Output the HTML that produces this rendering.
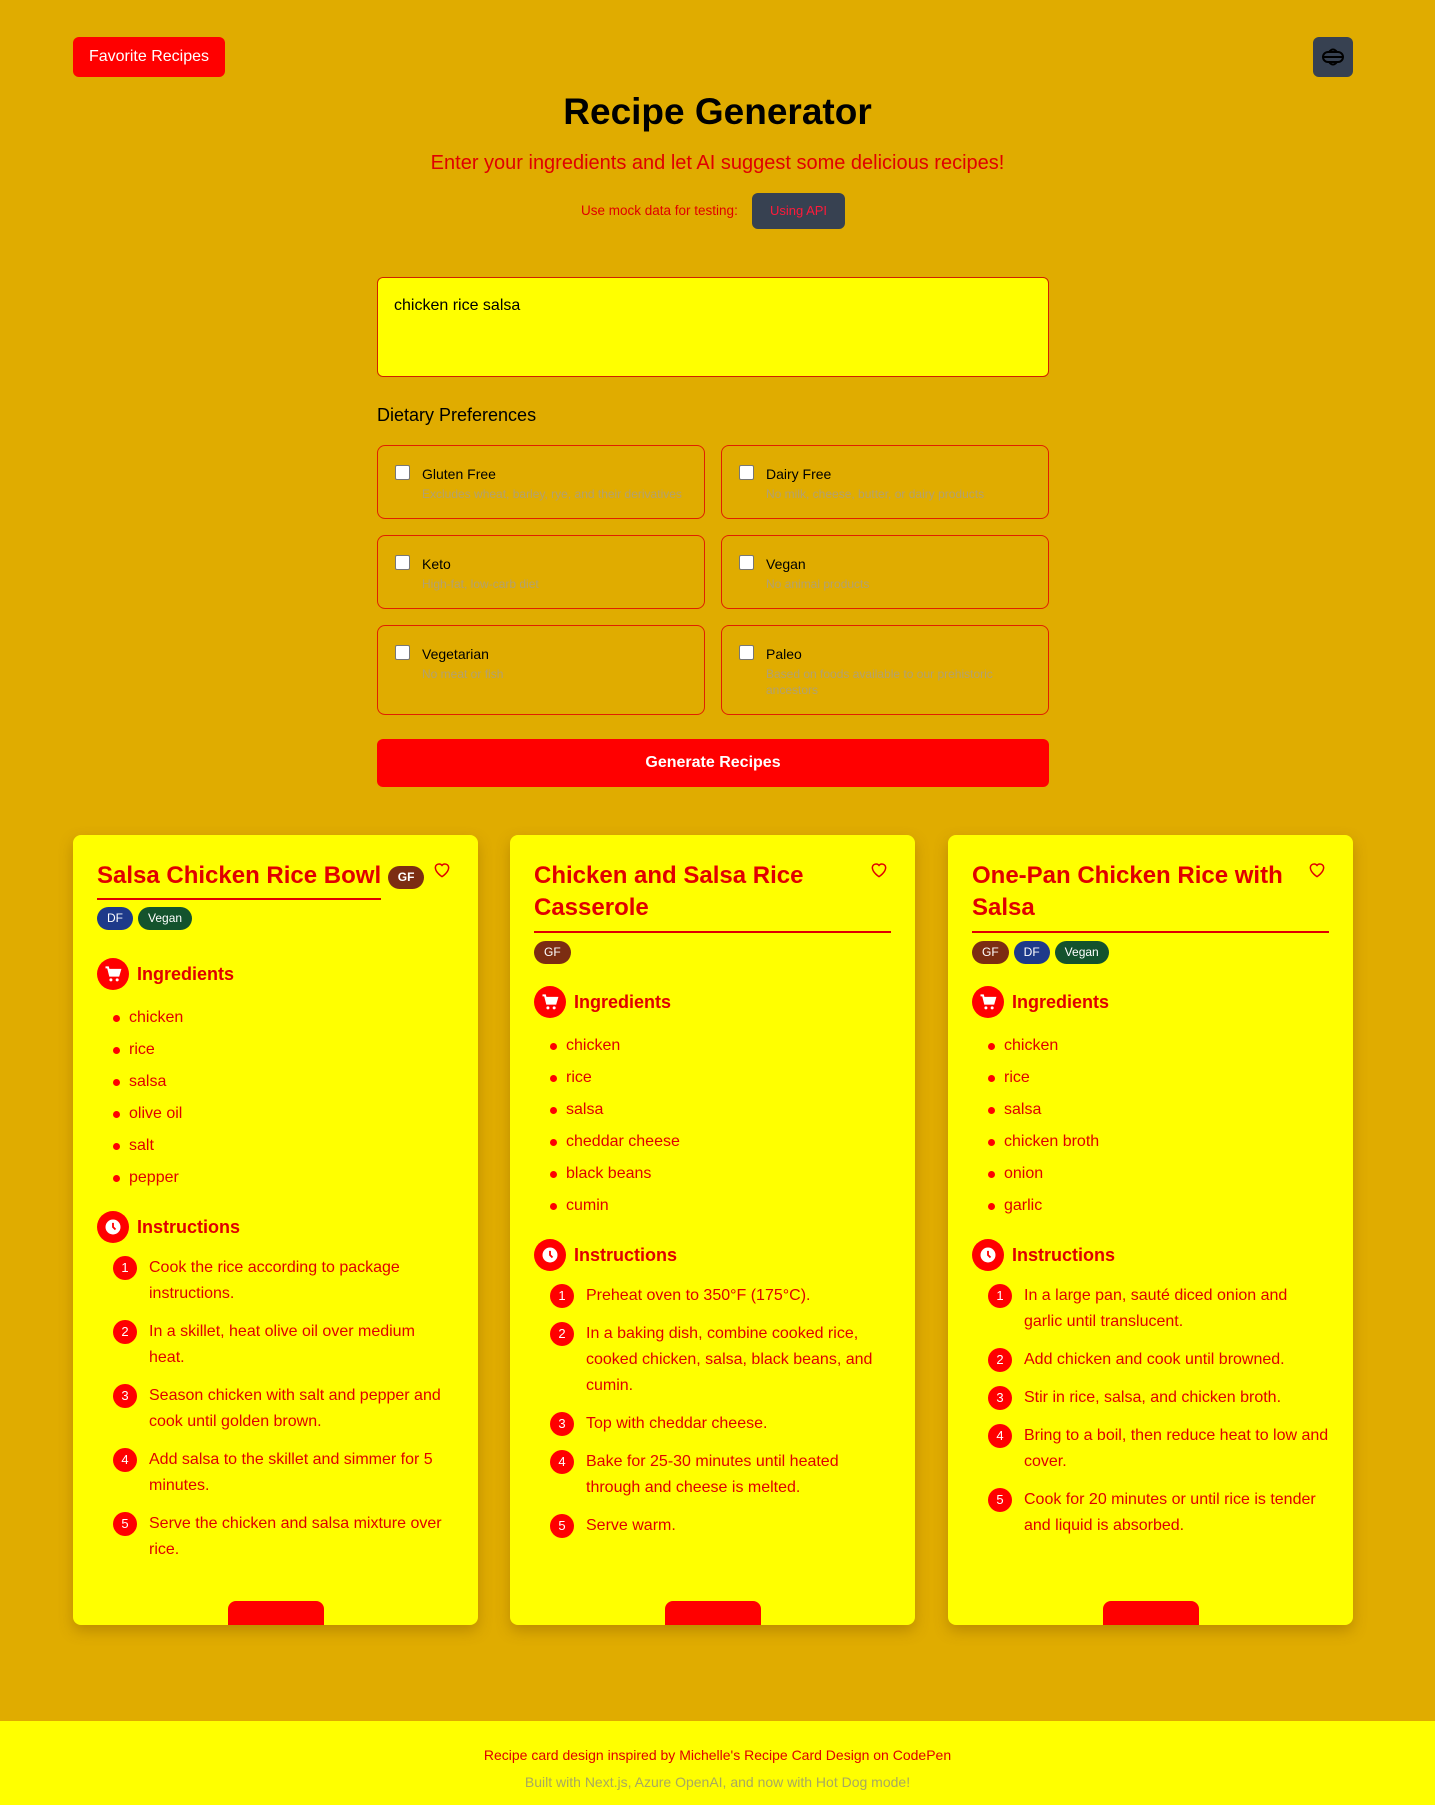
<!DOCTYPE html>
<html><head><meta charset="utf-8"><style>
*{box-sizing:border-box;margin:0;padding:0}
body{width:1435px;height:1805px;background:#e0ac00;font-family:"Liberation Sans",sans-serif;position:relative;overflow:hidden}
.abs{position:absolute}
.fav{left:73px;top:37px;width:152px;height:40px;background:#ff0000;color:#fff;border-radius:6px;font-size:16px;line-height:40px;text-align:center}
.tog{left:1313px;top:37px;width:40px;height:40px;background:#374151;border-radius:6px}
h1{position:absolute;left:0;width:1435px;top:91px;text-align:center;font-size:37px;font-weight:bold;color:#000}
.sub{left:0;width:1435px;top:152px;text-align:center;font-size:20px;color:#e00000}
.mock{left:581px;top:203px;font-size:13.5px;color:#e00000}
.api{left:752px;top:193px;width:93px;height:36px;background:#374151;border-radius:6px;color:#ff1a3a;font-size:13px;line-height:36px;text-align:center}
.ta{left:377px;top:277px;width:672px;height:100px;background:#ffff00;border:1px solid #d02000;border-radius:6px;padding:19px 16px;font-size:16px}
.dp{left:377px;top:405px;font-size:18px;color:#000}
.opt{position:absolute;width:328px;border:1px solid #e02000;border-radius:8px}
.opt .cb{position:absolute;left:17px;top:19px;width:15px;height:15px;background:#fff;border:1px solid #777;border-radius:2px}
.opt .l{position:absolute;left:44px;top:20px;font-size:14px;color:#000}
.opt .d{position:absolute;left:44px;top:40px;font-size:12px;color:#b2a070;line-height:16px;width:250px}
.gen{left:377px;top:739px;width:672px;height:48px;background:#ff0000;border-radius:6px;color:#fff;font-weight:bold;font-size:16px;line-height:48px;text-align:center}
.card{position:absolute;top:835px;width:405px;height:790px;background:#ffff00;border-radius:8px;box-shadow:0 6px 14px rgba(120,80,0,.35);padding:24px;color:#e00000;overflow:hidden}
.card h2{font-size:24px;font-weight:bold;line-height:32px;color:#e00000;width:320px;margin-top:1px}
.card h2 span.t{display:inline-block;border-bottom:2px solid #e00000;padding-bottom:6px}
.heart{position:absolute;right:26px;top:25px}
.bar{height:2px;background:#e00000;margin-top:7px}
.bd{display:inline-block;font-size:12px;color:#fff;border-radius:12px;padding:4px 10px;line-height:15px;margin-right:5px;vertical-align:middle}
.gf{background:#7c2d12}.df{background:#1e3a8a}.vg{background:#14532d}
.sec{display:flex;align-items:center;font-size:18px;font-weight:bold;margin:28px 0 12px}
.sec.i2{margin-top:22px}
.sec.ins{margin-top:17px}
.ic{width:32px;height:32px;border-radius:50%;background:#ff0000;margin-right:8px;display:flex;align-items:center;justify-content:center}
ul{list-style:none;margin-left:16px}
ul li{font-size:16px;line-height:32px;position:relative;padding-left:16px}
ul li:before{content:"";position:absolute;left:0;top:13px;width:7px;height:7px;border-radius:50%;background:#ff0000}
ol{list-style:none;margin-left:16px}
ol li{font-size:16px;line-height:26px;position:relative;padding-left:36px;margin-bottom:12px}
ol li b{position:absolute;left:0;top:1px;width:24px;height:24px;border-radius:50%;background:#ff0000;color:#fff;font-size:13px;font-weight:normal;text-align:center;line-height:24px}
.tab{position:absolute;bottom:0;left:155px;width:96px;height:24px;background:#ff0000;border-radius:8px 8px 0 0}
.foot{left:0;top:1721px;width:1435px;height:84px;background:#ffff00;text-align:center}
</style></head><body>
<div class="abs fav">Favorite Recipes</div>
<div class="abs tog"><svg width="40" height="40" viewBox="0 0 40 40"><rect x="10" y="15" width="20" height="10" rx="5" fill="none" stroke="#000" stroke-width="2"/><line x1="10" y1="20" x2="30" y2="20" stroke="#000" stroke-width="2"/><path d="M16 15 Q20 10 24 15 M16 25 Q20 30 24 25" fill="none" stroke="#000" stroke-width="2"/></svg></div>
<h1>Recipe Generator</h1>
<div class="abs sub">Enter your ingredients and let AI suggest some delicious recipes!</div>
<div class="abs mock">Use mock data for testing:</div>
<div class="abs api">Using API</div>
<div class="abs ta">chicken rice salsa</div>
<div class="abs dp">Dietary Preferences</div>
<div class="opt" style="left:377px;top:445px;height:74px"><div class="cb"></div><div class="l">Gluten Free</div><div class="d" style="width:280px">Excludes wheat, barley, rye, and their derivatives</div></div>
<div class="opt" style="left:721px;top:445px;height:74px"><div class="cb"></div><div class="l">Dairy Free</div><div class="d" style="width:280px">No milk, cheese, butter, or dairy products</div></div>
<div class="opt" style="left:377px;top:535px;height:74px"><div class="cb"></div><div class="l">Keto</div><div class="d">High-fat, low-carb diet</div></div>
<div class="opt" style="left:721px;top:535px;height:74px"><div class="cb"></div><div class="l">Vegan</div><div class="d">No animal products</div></div>
<div class="opt" style="left:377px;top:625px;height:90px"><div class="cb"></div><div class="l">Vegetarian</div><div class="d">No meat or fish</div></div>
<div class="opt" style="left:721px;top:625px;height:90px"><div class="cb"></div><div class="l">Paleo</div><div class="d">Based on foods available to our prehistoric ancestors</div></div>
<div class="abs gen">Generate Recipes</div>

<svg width="0" height="0" style="position:absolute"><defs>
<symbol id="heart" viewBox="0 0 24 24"><path d="M12 20s-8-5-8-11a4.5 4.5 0 0 1 8-2.5A4.5 4.5 0 0 1 20 9c0 6-8 11-8 11z" fill="none" stroke="#e00000" stroke-width="1.8"/></symbol>
<symbol id="cart" viewBox="0 0 24 24"><path d="M3 4h3l2.5 10h10l2-7H7" fill="none" stroke="#fff" stroke-width="2.4"/><path d="M8 7h12l-2 7H9z" fill="#fff"/><circle cx="9.5" cy="19" r="1.8" fill="#fff"/><circle cx="17" cy="19" r="1.8" fill="#fff"/></symbol>
<symbol id="clock" viewBox="0 0 24 24"><circle cx="12" cy="12" r="9" fill="#fff"/><path d="M12 7v5l3 3" stroke="#ff0000" stroke-width="2.2" fill="none"/></symbol>
</defs></svg>

<div class="card" style="left:73px">
<svg class="heart" width="20" height="20"><use href="#heart"/></svg>
<h2 style="width:340px"><span class="t">Salsa Chicken Rice Bowl</span> <span class="bd gf" style="vertical-align:top;margin-top:6px">GF</span></h2>
<div style="margin-top:7px"><span class="bd df">DF</span><span class="bd vg">Vegan</span></div>
<div class="sec"><div class="ic"><svg width="20" height="20"><use href="#cart"/></svg></div>Ingredients</div>
<ul><li>chicken</li><li>rice</li><li>salsa</li><li>olive oil</li><li>salt</li><li>pepper</li></ul>
<div class="sec ins"><div class="ic"><svg width="20" height="20"><use href="#clock"/></svg></div>Instructions</div>
<ol><li><b>1</b>Cook the rice according to package instructions.</li><li><b>2</b>In a skillet, heat olive oil over medium heat.</li><li><b>3</b>Season chicken with salt and pepper and cook until golden brown.</li><li><b>4</b>Add salsa to the skillet and simmer for 5 minutes.</li><li><b>5</b>Serve the chicken and salsa mixture over rice.</li></ol>
<div class="tab"></div></div>

<div class="card" style="left:510px">
<svg class="heart" width="20" height="20"><use href="#heart"/></svg>
<h2 style="width:290px">Chicken and Salsa Rice Casserole</h2>
<div class="bar"></div>
<div style="margin-top:8px"><span class="bd gf">GF</span></div>
<div class="sec i2"><div class="ic"><svg width="20" height="20"><use href="#cart"/></svg></div>Ingredients</div>
<ul><li>chicken</li><li>rice</li><li>salsa</li><li>cheddar cheese</li><li>black beans</li><li>cumin</li></ul>
<div class="sec ins"><div class="ic"><svg width="20" height="20"><use href="#clock"/></svg></div>Instructions</div>
<ol><li><b>1</b>Preheat oven to 350°F (175°C).</li><li><b>2</b>In a baking dish, combine cooked rice, cooked chicken, salsa, black beans, and cumin.</li><li><b>3</b>Top with cheddar cheese.</li><li><b>4</b>Bake for 25-30 minutes until heated through and cheese is melted.</li><li><b>5</b>Serve warm.</li></ol>
<div class="tab"></div></div>

<div class="card" style="left:948px">
<svg class="heart" width="20" height="20"><use href="#heart"/></svg>
<h2 style="width:320px">One-Pan Chicken Rice with Salsa</h2>
<div class="bar"></div>
<div style="margin-top:8px"><span class="bd gf">GF</span><span class="bd df">DF</span><span class="bd vg">Vegan</span></div>
<div class="sec i2"><div class="ic"><svg width="20" height="20"><use href="#cart"/></svg></div>Ingredients</div>
<ul><li>chicken</li><li>rice</li><li>salsa</li><li>chicken broth</li><li>onion</li><li>garlic</li></ul>
<div class="sec ins"><div class="ic"><svg width="20" height="20"><use href="#clock"/></svg></div>Instructions</div>
<ol><li><b>1</b>In a large pan, sauté diced onion and garlic until translucent.</li><li><b>2</b>Add chicken and cook until browned.</li><li><b>3</b>Stir in rice, salsa, and chicken broth.</li><li><b>4</b>Bring to a boil, then reduce heat to low and cover.</li><li><b>5</b>Cook for 20 minutes or until rice is tender and liquid is absorbed.</li></ol>
<div class="tab"></div></div>

<div class="abs foot"><div style="margin-top:26px;font-size:14px;color:#e00000">Recipe card design inspired by Michelle's Recipe Card Design on CodePen</div><div style="margin-top:11px;font-size:14px;color:#a8a860">Built with Next.js, Azure OpenAI, and now with Hot Dog mode!</div></div>
</body></html>
